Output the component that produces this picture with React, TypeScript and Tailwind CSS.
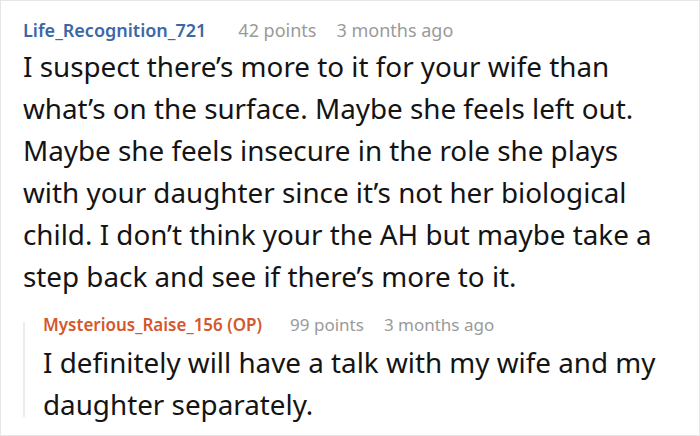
import React from 'react';

type CommentProps = {
  author: string;
  points: number;
  time: string;
  op?: boolean;
};

function Meta({ author, points, time, op }: CommentProps) {
  return (
    <div className={`flex items-baseline ${op ? 'text-[17px] leading-[22px]' : 'text-[18px] leading-[24px]'}`}>
      <span className={`font-semibold ${op ? 'text-[#d4582b]' : 'text-[#3b67a8]'}`}>
        {author}
        {op && ' (OP)'}
      </span>
      <span className={`${op ? 'ml-[28px]' : 'ml-[32px]'} text-[#9a9a9a]`}>{points} points</span>
      <span className="ml-[20px] text-[#9a9a9a]">{time}</span>
    </div>
  );
}

export default function App() {
  return (
    <div
      className="w-[700px] h-[436px] bg-white border border-[#e6e6e6] px-[22px] pt-[17px] overflow-hidden"
      style={{ fontFamily: '"Noto Sans", sans-serif' }}
    >
      {/* Parent comment */}
      <Meta author="Life_Recognition_721" points={42} time="3 months ago" />
      <p className="mt-[3px] text-[27.8px] leading-[42px] text-[#141414]">
        I suspect there’s more to it for your wife than what’s on the surface. Maybe she feels left out.
        Maybe she feels insecure in the role she plays with your daughter since it’s not her biological
        child. I don’t think your the AH but maybe take a step back and see if there’s more to it.
      </p>

      {/* Reply */}
      <div className="mt-[17px] flex">
        <div className="w-[2px] bg-[#ececec] my-[8px] shrink-0" />
        <div className="pl-[18px]">
          <Meta author="Mysterious_Raise_156" points={99} time="3 months ago" op />
          <p className="mt-[5px] text-[27.8px] leading-[42px] text-[#141414] w-[625px]">
            I definitely will have a talk with my wife and my daughter separately.
          </p>
        </div>
      </div>
    </div>
  );
}
